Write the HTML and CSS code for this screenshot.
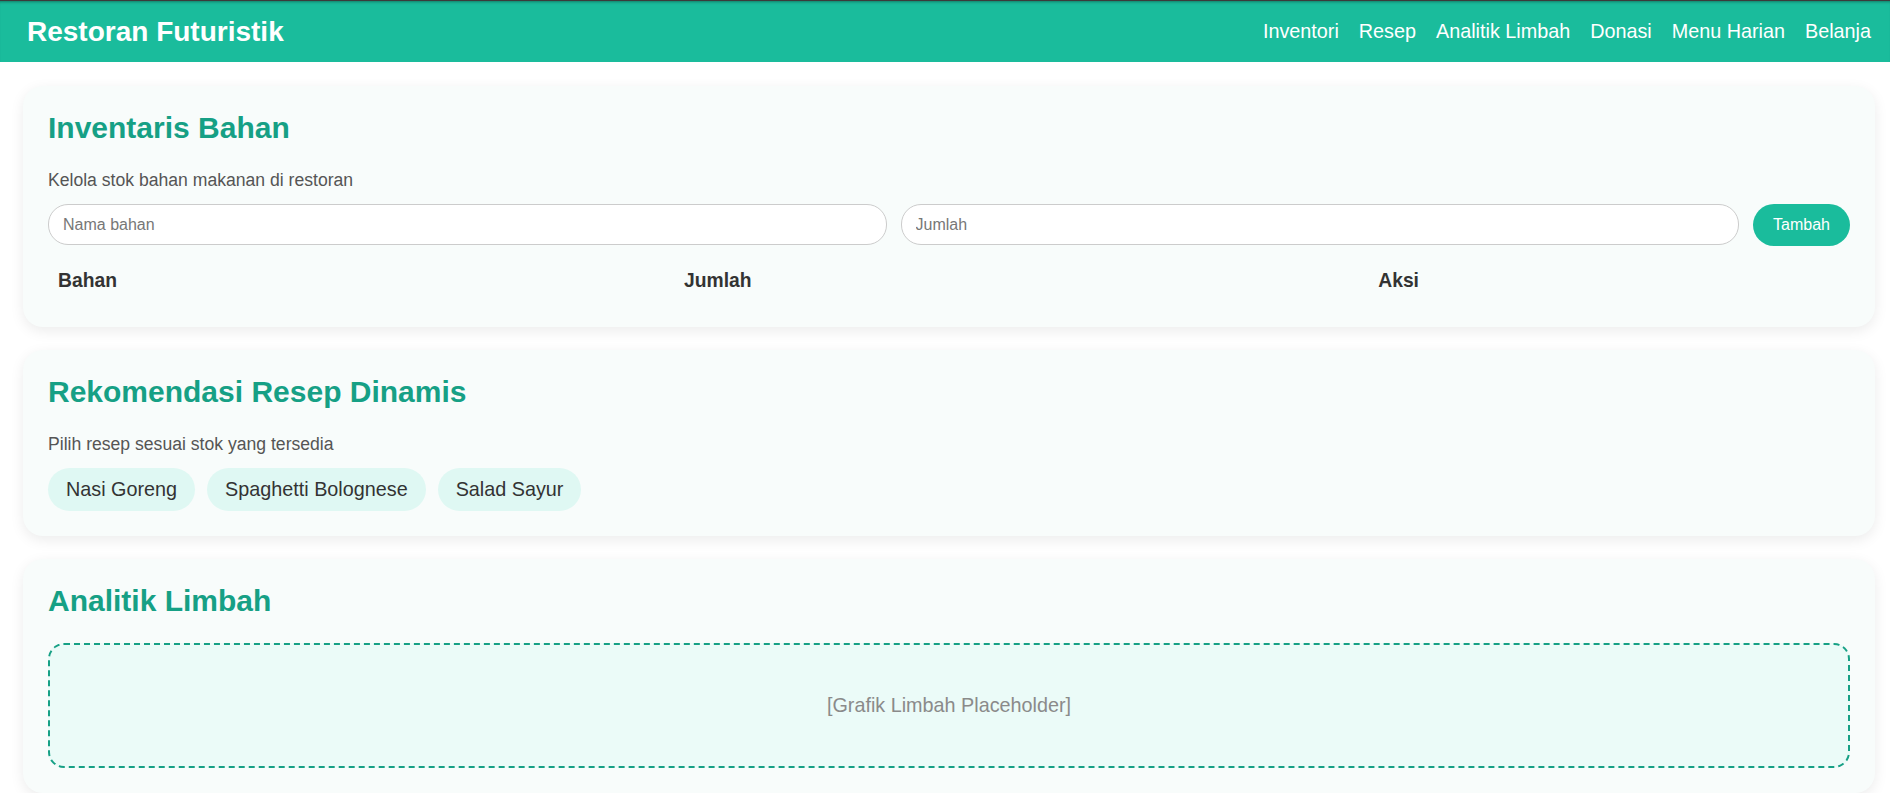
FILE: index.html
```html
<!DOCTYPE html>
<html lang="id">
<head>
<meta charset="utf-8">
<title>Restoran Futuristik</title>
<link rel="stylesheet" href="styles.css">
</head>
<body>
<header class="topbar">
  <h1 class="brand">Restoran Futuristik</h1>
  <nav class="nav">
    <a href="#inventori">Inventori</a>
    <a href="#resep">Resep</a>
    <a href="#limbah">Analitik Limbah</a>
    <a href="#donasi">Donasi</a>
    <a href="#menu">Menu Harian</a>
    <a href="#belanja">Belanja</a>
  </nav>
</header>
<main class="content">
  <section class="card" id="inventori">
    <h2 class="card-title">Inventaris Bahan</h2>
    <p class="card-desc">Kelola stok bahan makanan di restoran</p>
    <div class="form-row">
      <input class="field" type="text" placeholder="Nama bahan">
      <input class="field" type="text" placeholder="Jumlah">
      <button class="btn" type="button">Tambah</button>
    </div>
    <table class="stock-table">
      <thead>
        <tr><th>Bahan</th><th>Jumlah</th><th>Aksi</th></tr>
      </thead>
      <tbody></tbody>
    </table>
  </section>
  <section class="card" id="resep">
    <h2 class="card-title">Rekomendasi Resep Dinamis</h2>
    <p class="card-desc">Pilih resep sesuai stok yang tersedia</p>
    <div class="chips">
      <span class="chip">Nasi Goreng</span>
      <span class="chip">Spaghetti Bolognese</span>
      <span class="chip">Salad Sayur</span>
    </div>
  </section>
  <section class="card" id="limbah">
    <h2 class="card-title">Analitik Limbah</h2>
    <div class="chart-placeholder">[Grafik Limbah Placeholder]</div>
  </section>
</main>
</body>
</html>
```

FILE: styles.css
```css
* { box-sizing: border-box; }

body {
  margin: 0;
  background: #ffffff;
  font-family: "Liberation Sans", Arial, Helvetica, sans-serif;
  color: #333333;
}

.topbar {
  height: 62px;
  background: #1abc9c;
  border-top: 1px solid #3b3b3b;
  box-shadow: inset 0 3px 3px -2px rgba(0, 0, 0, 0.35);
  display: flex;
  align-items: center;
  justify-content: space-between;
  padding: 0 19px 0 27px;
}

.brand {
  margin: 0;
  font-size: 28px;
  font-weight: bold;
  color: #ffffff;
}

.nav {
  display: flex;
  gap: 20px;
}

.nav a {
  color: #ffffff;
  text-decoration: none;
  font-size: 19.8px;
}

.content {
  display: flex;
  flex-direction: column;
  gap: 23px;
  padding: 24px 15px 0 23px;
}

.card {
  background: #f8fcfb;
  border-radius: 20px;
  box-shadow: 0 4px 14px rgba(0, 0, 0, 0.08);
  padding: 25px;
}

.card-title {
  margin: 0 0 25px;
  font-size: 30px;
  font-weight: bold;
  color: #16a085;
}

.card-desc {
  margin: 0 0 13px;
  font-size: 17.6px;
  color: #555555;
}

.form-row {
  display: flex;
  gap: 14px;
}

.field {
  flex: 1;
  height: 41px;
  border: 1px solid #cccccc;
  border-radius: 20px;
  padding: 0 14px;
  font-family: inherit;
  font-size: 16px;
  background: #ffffff;
  color: #333333;
}

.field::placeholder { color: #777777; }

.btn {
  height: 42px;
  border: none;
  border-radius: 21px;
  padding: 0 20px;
  background: #1abc9c;
  color: #ffffff;
  font-family: inherit;
  font-size: 16px;
}

.stock-table {
  width: 100%;
  margin-top: 14px;
  border-collapse: collapse;
}

.stock-table th {
  text-align: left;
  padding: 10px;
  font-size: 19.3px;
  font-weight: bold;
  color: #333333;
}

.chips {
  display: flex;
  gap: 12px;
}

.chip {
  background: #dff8f3;
  border-radius: 22px;
  padding: 10px 18px;
  font-size: 19.8px;
  color: #333333;
}

.chart-placeholder {
  height: 125px;
  border: 2px dashed #16a085;
  border-radius: 16px;
  background: #ebfbf8;
  display: flex;
  align-items: center;
  justify-content: center;
  font-size: 19.8px;
  color: #8a8a8a;
}
```
